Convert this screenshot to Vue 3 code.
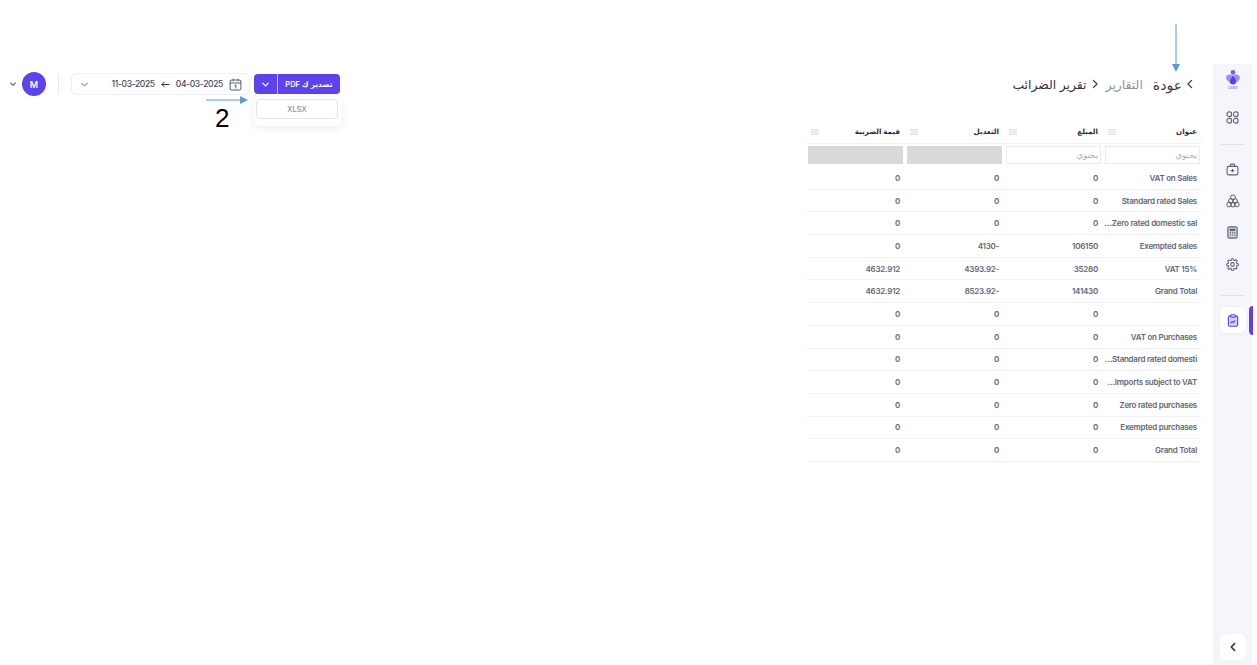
<template>
  <div class="page">
    <!-- الشريط الجانبي -->
    <aside class="sidebar">
      <div class="logo">
        <svg width="14" height="15" viewBox="0 0 14 15">
          <circle cx="7" cy="2.4" r="2.3" fill="#7a5cf0" />
          <path d="M7 5.4C5.6 4.2 2.8 4 1.3 5.2-.4 6.6-.1 9.2 1.6 10.8c1.2 1.1 2.6 2.2 3.6 3.2C3.6 11.2 4.6 7.8 7 5.4z" fill="#a48df5" />
          <path d="M7 5.4c1.4-1.2 4.2-1.4 5.7-.2 1.7 1.4 1.4 4-.3 5.6-1.2 1.1-2.6 2.2-3.6 3.2C10.4 11.2 9.4 7.8 7 5.4z" fill="#a48df5" />
          <path d="M7 5.6c1.5 1.9 3 3.7 3 5.8a3 3 0 0 1-6 0c0-2.1 1.5-3.9 3-5.8z" fill="#5b3de8" />
        </svg>
        <span class="logo-text">CARE</span>
      </div>

      <button class="side-btn first">
        <svg width="13" height="13" viewBox="0 0 14 14" fill="none" stroke="#5d6170" stroke-width="1.2">
          <rect x="1" y="1" width="5" height="5" rx="2.2" />
          <rect x="8" y="1" width="5" height="5" rx="2.2" />
          <rect x="1" y="8" width="5" height="5" rx="2.2" />
          <rect x="8" y="8" width="5" height="5" rx="2.2" />
        </svg>
      </button>
      <div class="side-line"></div>

      <div class="side-group">
        <button class="side-btn">
          <svg width="13" height="13" viewBox="0 0 14 14" fill="none" stroke="#5d6170" stroke-width="1.2" stroke-linejoin="round">
            <rect x="1.2" y="3.6" width="11.6" height="9.2" rx="1.8" />
            <path d="M4.8 3.6V2.2a1 1 0 0 1 1-1h2.4a1 1 0 0 1 1 1v1.4M7 6.4v3.6M5.2 8.2h3.6" />
          </svg>
        </button>
        <button class="side-btn">
          <svg width="14" height="14" viewBox="0 0 14 14" fill="none" stroke="#5d6170" stroke-width="1">
            <circle cx="7" cy="3.4" r="2.4" />
            <circle cx="4.9" cy="7" r="2.4" />
            <circle cx="9.1" cy="7" r="2.4" />
            <circle cx="3.2" cy="10.4" r="2.4" />
            <circle cx="7" cy="10.6" r="2.4" />
            <circle cx="10.8" cy="10.4" r="2.4" />
          </svg>
        </button>
        <button class="side-btn">
          <svg width="13" height="13" viewBox="0 0 14 14" fill="#d5d7df" stroke="#5d6170" stroke-width="1.2">
            <rect x="2" y="1" width="10" height="12" rx="1.8" />
            <rect x="4" y="3" width="6" height="2.4" fill="#5d6170" stroke="none" />
            <path d="M4 7.4h1.4M6.4 7.4h1.4M8.8 7.4h1.4M4 10h1.4M6.4 10h1.4M8.8 10h1.4" />
          </svg>
        </button>
        <button class="side-btn">
          <svg width="13" height="13" viewBox="0 0 24 24" fill="none" stroke="#5d6170" stroke-width="2" stroke-linejoin="round">
            <circle cx="12" cy="12" r="3.4" />
            <path d="M19.4 15a1.6 1.6 0 0 0 .3 1.8l.1.1a2 2 0 1 1-2.9 2.9l-.1-.1a1.6 1.6 0 0 0-2.8 1.1V21a2 2 0 0 1-4 0v-.1a1.6 1.6 0 0 0-2.8-1.1l-.1.1a2 2 0 1 1-2.9-2.9l.1-.1a1.6 1.6 0 0 0-1.1-2.8H3a2 2 0 0 1 0-4h.1a1.6 1.6 0 0 0 1.1-2.8l-.1-.1a2 2 0 1 1 2.9-2.9l.1.1a1.6 1.6 0 0 0 1.8.3h.1a1.6 1.6 0 0 0 1-1.5V3a2 2 0 0 1 4 0v.1a1.6 1.6 0 0 0 2.8 1.1l.1-.1a2 2 0 1 1 2.9 2.9l-.1.1a1.6 1.6 0 0 0-.3 1.8v.1a1.6 1.6 0 0 0 1.5 1H21a2 2 0 0 1 0 4h-.1a1.6 1.6 0 0 0-1.5 1z" />
          </svg>
        </button>
      </div>
      <div class="side-line second"></div>

      <button class="side-btn active">
        <svg width="12" height="13" viewBox="0 0 12 14" fill="none" stroke="#5b3de8" stroke-width="1.2">
          <rect x="1" y="2" width="10" height="11.2" rx="1.6" fill="#d9d1fb" />
          <rect x="3.6" y=".8" width="4.8" height="2.6" rx=".8" fill="#fff" />
          <path d="M3.4 9.8l1.6-1.6 1.2 1 2.4-2.4" />
        </svg>
        <span class="active-bar"></span>
      </button>

      <button class="side-btn collapse">
        <svg width="10" height="10" viewBox="0 0 10 10" fill="none" stroke="#33363f" stroke-width="1.6" stroke-linecap="round" stroke-linejoin="round">
          <path d="M6.6 1.6L3.2 5l3.4 3.4" />
        </svg>
      </button>
    </aside>

    <!-- المحتوى -->
    <main class="content">
      <header class="topbar">
        <nav class="crumbs">
          <svg class="crumb-chev back" width="8" height="10" viewBox="0 0 8 10" fill="none" stroke="#33363f" stroke-width="1.2" stroke-linecap="round" stroke-linejoin="round">
            <path d="M5.6 1.4L2 5l3.6 3.6" />
          </svg>
          <span class="crumb back-text">عودة</span>
          <span class="crumb muted">التقارير</span>
          <svg class="crumb-chev" width="8" height="10" viewBox="0 0 8 10" fill="none" stroke="#33363f" stroke-width="1.2" stroke-linecap="round" stroke-linejoin="round">
            <path d="M2.4 1.4L6 5 2.4 8.6" />
          </svg>
          <span class="crumb">تقرير الضرائب</span>
        </nav>

        <div class="tools">
          <div class="export">
            <div class="split">
              <button class="split-main">تصدير ك PDF</button>
              <button class="split-arrow">
                <svg width="9" height="9" viewBox="0 0 10 10" fill="none" stroke="#fff" stroke-width="1.3" stroke-linecap="round" stroke-linejoin="round">
                  <path d="M2 3.6L5 6.6l3-3" />
                </svg>
              </button>
            </div>
            <div class="menu">
              <button class="menu-item">XLSX</button>
            </div>
          </div>

          <div class="range">
            <svg width="13" height="13" viewBox="0 0 14 14" fill="none" stroke="#5d6170" stroke-width="1.1" stroke-linecap="round">
              <rect x="1.2" y="2.2" width="11.6" height="10.8" rx="2" />
              <path d="M1.2 5.4h11.6M4.4 1v2.2M9.6 1v2.2M6.4 8.2l1-.6v3.2" />
            </svg>
            <span class="date">04-03-2025</span>
            <svg width="9" height="7" viewBox="0 0 9 7" fill="none" stroke="#33363f" stroke-width="1" stroke-linecap="round" stroke-linejoin="round">
              <path d="M8 3.5H1M3.4 1L1 3.5 3.4 6" />
            </svg>
            <span class="date">11-03-2025</span>
            <svg class="range-chev" width="9" height="9" viewBox="0 0 10 10" fill="none" stroke="#5d6170" stroke-width="1.1" stroke-linecap="round" stroke-linejoin="round">
              <path d="M2 3.6L5 6.6l3-3" />
            </svg>
          </div>

          <div class="tool-line"></div>
          <div class="avatar">M</div>
          <svg class="user-chev" width="8" height="8" viewBox="0 0 10 10" fill="none" stroke="#5d6170" stroke-width="1.3" stroke-linecap="round" stroke-linejoin="round">
            <path d="M2 3.6L5 6.6l3-3" />
          </svg>
        </div>
      </header>

      <section class="grid">
        <div class="row head">
          <div v-for="col in columns" :key="col" class="cell head-cell">
            <span>{{ col }}</span>
            <svg width="8" height="6" viewBox="0 0 8 6" stroke="#c9cbd3" stroke-width=".8">
              <path d="M0 .8h8M0 3h8M0 5.2h8" />
            </svg>
          </div>
        </div>
        <div class="row filters">
          <div class="filter"><input class="filter-input" placeholder="يحتوي" /></div>
          <div class="filter"><input class="filter-input" placeholder="يحتوي" /></div>
          <div class="filter"><div class="filter-off"></div></div>
          <div class="filter"><div class="filter-off"></div></div>
        </div>
        <div v-for="(line, i) in lines" :key="i" class="row body">
          <div class="cell">{{ line[0] }}</div>
          <div class="cell">{{ line[1] }}</div>
          <div class="cell">{{ line[2] }}</div>
          <div class="cell">{{ line[3] }}</div>
        </div>
      </section>
    </main>

    <!-- أسهم التوضيح -->
    <svg class="note-arrow down" width="10" height="48" viewBox="0 0 10 48">
      <path d="M5 0V41" stroke="#5b9bd5" stroke-width="1" />
      <path d="M1 40h8l-4 8z" fill="#5b9bd5" />
    </svg>
    <svg class="note-arrow across" width="42" height="10" viewBox="0 0 42 10">
      <path d="M0 5H35" stroke="#5b9bd5" stroke-width="1" />
      <path d="M34 1v8l8-4z" fill="#5b9bd5" />
    </svg>
    <span class="note-num">2</span>
  </div>
</template>

<script setup>
const columns = ['عنوان', 'المبلغ', 'التعديل', 'قيمة الضريبة']

const lines = [
  ['VAT on Sales', '0', '0', '0'],
  ['Standard rated Sales', '0', '0', '0'],
  ['Zero rated domestic sal…', '0', '0', '0'],
  ['Exempted sales', '106150', '-4130', '0'],
  ['VAT 15%\u200E', '35280', '-4393.92', '4632.912'],
  ['Grand Total', '141430', '-8523.92', '4632.912'],
  ['', '0', '0', '0'],
  ['VAT on Purchases', '0', '0', '0'],
  ['Standard rated domesti…', '0', '0', '0'],
  ['Imports subject to VAT…', '0', '0', '0'],
  ['Zero rated purchases', '0', '0', '0'],
  ['Exempted purchases', '0', '0', '0'],
  ['Grand Total', '0', '0', '0']
]
</script>

<style>
html,
body {
  margin: 0;
  background: #fff;
}
</style>

<style scoped>
.page {
  position: relative;
  display: flex;
  flex-direction: row-reverse;
  box-sizing: border-box;
  width: 1257px;
  height: 665px;
  padding: 64px 5px 0 0;
  overflow: hidden;
  background: #fff;
  font-family: Inter, "DejaVu Sans", sans-serif;
  color: #33363f;
}

button {
  font-family: inherit;
  cursor: pointer;
}

.sidebar {
  position: relative;
  display: flex;
  flex-direction: column;
  align-items: center;
  flex-shrink: 0;
  width: 39px;
  background: #f5f6fb;
}

.logo {
  display: flex;
  flex-direction: column;
  align-items: center;
  height: 40px;
  padding-top: 6px;
  box-sizing: border-box;
}

.logo-text {
  margin-top: 1px;
  font-size: 3.5px;
  font-weight: 700;
  line-height: 4px;
  color: #a48df5;
}

.side-btn {
  position: relative;
  display: flex;
  align-items: center;
  justify-content: center;
  flex-shrink: 0;
  width: 26px;
  height: 26px;
  padding: 0;
  background: transparent;
  border: none;
  border-radius: 6px;
}

.side-line {
  flex-shrink: 0;
  width: 24px;
  height: 1px;
  margin: 14px 0 11px;
  background: #e2e3ea;
}

.side-line.second {
  margin-top: 18px;
}

.side-group {
  display: flex;
  flex-direction: column;
  gap: 5.7px;
}

.side-btn.active {
  background: #fff;
  box-shadow: 0 1px 4px rgba(40, 40, 80, 0.05);
}

.active-bar {
  position: absolute;
  top: -1px;
  right: -7px;
  width: 4px;
  height: 29px;
  background: #5e42ea;
  border-radius: 4px 0 0 4px;
}

.side-btn.collapse {
  margin: auto 0 5px;
  background: #fff;
}

.content {
  flex: 1;
  min-width: 0;
  box-sizing: border-box;
  padding: 9px 11px 0 9px;
  direction: rtl;
}

.topbar {
  display: flex;
  align-items: center;
  justify-content: space-between;
  height: 22px;
  margin-bottom: 27px;
}

.crumbs {
  display: flex;
  align-items: center;
  padding-right: 8px;
  font-size: 12.4px;
  white-space: nowrap;
}

.crumb {
  color: #33363f;
}

.crumb.back-text {
  margin: 0 4px 0 10px;
  font-size: 14px;
}

.crumb.muted {
  color: #8f929c;
}

.crumb-chev {
  margin: 0 7px 0 4px;
  flex-shrink: 0;
}

.crumb-chev.back {
  margin: 0;
}

.tools {
  display: flex;
  align-items: center;
}

.export {
  position: relative;
}

.split {
  display: flex;
  width: 86px;
  height: 20px;
  overflow: hidden;
  background: #5e42ea;
  border-radius: 4px;
}

.split-main {
  flex: 1;
  padding: 0;
  color: #fff;
  font-size: 7.5px;
  font-weight: 600;
  background: transparent;
  border: none;
  border-left: 1px solid #cfc6f8;
}

.split-arrow {
  display: flex;
  align-items: center;
  justify-content: center;
  width: 23px;
  padding: 0;
  background: transparent;
  border: none;
}

.menu {
  position: absolute;
  top: 23px;
  right: -1px;
  display: flex;
  box-sizing: border-box;
  width: 87px;
  height: 29px;
  padding: 2px 3px 7px 2px;
  background: #fff;
  border-radius: 4px;
  box-shadow: 0 2px 8px rgba(40, 40, 80, 0.08);
}

.menu-item {
  width: 100%;
  padding: 0;
  color: #8a8d98;
  font-size: 7.5px;
  font-weight: 500;
  background: #fff;
  border: 1px solid #e3e4ea;
  border-radius: 4px;
}

.range {
  display: flex;
  align-items: center;
  box-sizing: border-box;
  width: 179px;
  height: 22px;
  margin-right: 4px;
  padding: 0 7px;
  background: #fff;
  border: 1px solid #eeeef3;
  border-radius: 6px;
}

.date {
  margin: 0 6px;
  font-size: 8.5px;
  font-weight: 500;
  letter-spacing: -0.35px;
  color: #44475a;
  white-space: nowrap;
}

.range-chev {
  margin-right: auto;
  margin-left: 1px;
}

.tool-line {
  width: 1px;
  height: 20px;
  margin: 0 12px;
  background: #e6e7ec;
}

.avatar {
  display: flex;
  align-items: center;
  justify-content: center;
  width: 24px;
  height: 24px;
  color: #fff;
  font-size: 9px;
  font-weight: 600;
  background: #5e42ea;
  border-radius: 50%;
}

.user-chev {
  margin-right: 5px;
}

.grid {
  width: 396px;
}

.row {
  display: grid;
  grid-template-columns: repeat(4, 99px);
}

.row.head {
  height: 22px;
  padding-bottom: 2px;
  border-bottom: 1px solid #f3f3f7;
  box-sizing: border-box;
}

.cell {
  display: flex;
  align-items: center;
  min-width: 0;
  padding-right: 5px;
  font-size: 8px;
  font-weight: 600;
  letter-spacing: -0.25px;
  color: #636675;
  white-space: nowrap;
}

.head-cell {
  justify-content: space-between;
  padding-left: 5px;
  font-weight: 700;
  font-size: 7.2px;
  letter-spacing: 0;
  color: #2b2d36;
}

.row.filters {
  box-sizing: border-box;
  height: 23px;
  padding-top: 2px;
  align-items: start;
}

.filter {
  display: flex;
  padding: 0 2px;
}

.filter-input {
  box-sizing: border-box;
  width: 95px;
  height: 18px;
  padding: 0 2px;
  font-family: inherit;
  font-size: 8.5px;
  text-align: right;
  background: #fff;
  border: 1px solid #e9ebf3;
  outline: none;
}

.filter-input::placeholder {
  color: #a9abb4;
}

.filter-off {
  width: 95px;
  height: 18px;
  background: #d9d9d9;
}

.row.body {
  box-sizing: border-box;
  height: 22.7px;
  border-bottom: 1px solid #f3f3f7;
}

.note-arrow {
  position: absolute;
}

.note-arrow.down {
  top: 24px;
  left: 1171px;
}

.note-arrow.across {
  top: 95px;
  left: 206px;
}

.note-num {
  position: absolute;
  top: 103px;
  left: 215px;
  font-family: "Liberation Sans", sans-serif;
  font-size: 26px;
  line-height: 30px;
  color: #000;
}
</style>
